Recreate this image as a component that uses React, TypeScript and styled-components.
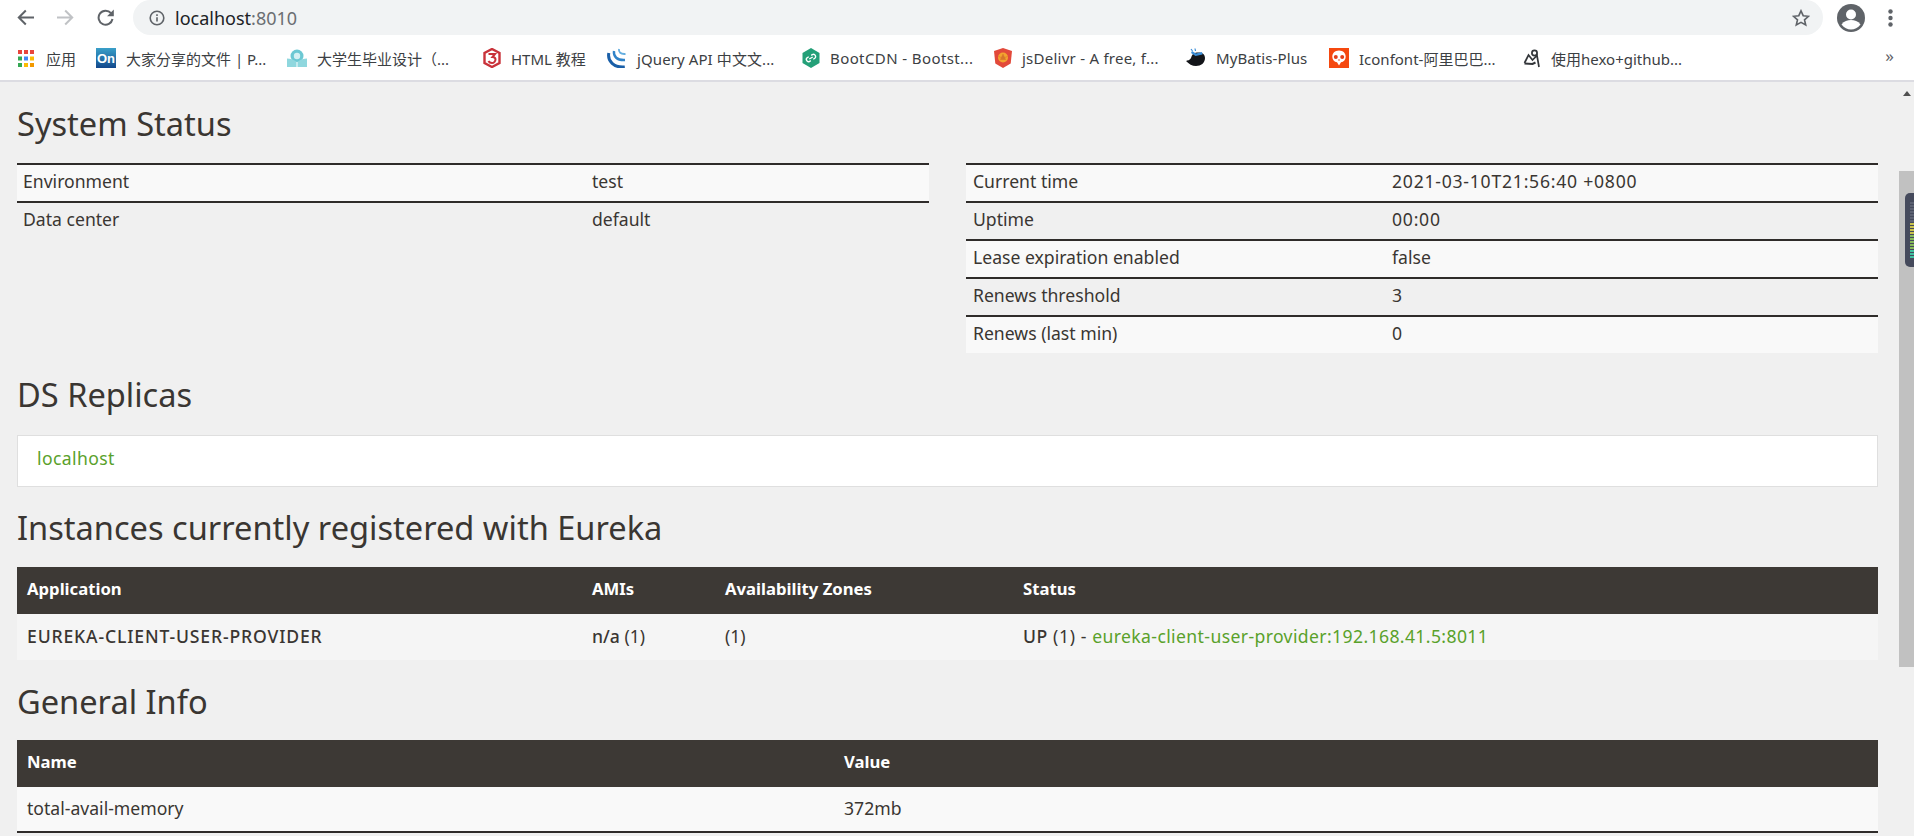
import React from 'react';
import styled, { createGlobalStyle } from 'styled-components';

const GlobalStyle = createGlobalStyle`
  html, body {
    margin: 0;
    height: 100%;
    overflow: hidden;
    background: #f0f0f0;
  }
  * {
    box-sizing: border-box;
  }
`;

const UI_FONT = `"Noto Sans", "Noto Sans CJK SC", sans-serif`;
const PAGE_FONT = `"Noto Sans", "Open Sans", sans-serif`;

const Shell = styled.div`
  display: flex;
  flex-direction: column;
  width: 1914px;
  height: 836px;
  overflow: hidden;
`;

const Toolbar = styled.header`
  display: flex;
  align-items: center;
  height: 35px;
  padding-left: 17px;
  background: #fff;
  flex: none;
`;

const NavButton = styled.button`
  display: flex;
  width: 17px;
  height: 17px;
  padding: 0;
  margin-right: 23px;
  border: 0;
  background: none;
  &:nth-child(3) {
    margin-right: 19px;
  }
`;

const AddressBar = styled.div`
  display: flex;
  align-items: center;
  width: 1690px;
  height: 35px;
  padding: 0 13px 0 16px;
  border-radius: 18px;
  background: #f1f3f4;
  font: 18px ${UI_FONT};
  color: #202124;
`;

const Host = styled.span`
  margin-left: 10px;
  flex: 1;
`;

const Port = styled.span`
  color: #6b6e72;
`;

const ProfileArea = styled.div`
  display: flex;
  align-items: center;
  margin-left: 14px;
  gap: 23px;
`;

const Bookmarks = styled.nav`
  display: flex;
  align-items: center;
  height: 47px;
  padding: 1px 0 0 18px;
  background: #fff;
  border-bottom: 2px solid #dcdce2;
  flex: none;
  position: relative;
`;

const Bookmark = styled.a<{ $width: number; $spacing?: number }>`
  display: flex;
  align-items: center;
  gap: 10px;
  width: ${(p) => p.$width}px;
  font: 15px ${UI_FONT};
  letter-spacing: ${(p) => p.$spacing ?? 0}px;
  color: #3c4043;
  white-space: nowrap;
  flex: none;
`;

const IconSlot = styled.span`
  display: flex;
  margin-right: 2px;
`;

const More = styled.span`
  position: absolute;
  right: 20px;
  top: 9px;
  font: 17px ${UI_FONT};
  color: #5f6368;
`;

const Body = styled.div`
  display: flex;
  flex: 1;
  min-height: 0;
`;

const Page = styled.main`
  flex: 1;
  padding: 0 21px 0 17px;
  font: 17.6px/22px ${PAGE_FONT};
  color: #3a3632;
  min-width: 0;
`;

const Heading = styled.h1<{ $top: number; $bottom: number }>`
  margin: ${(p) => p.$top}px 0 ${(p) => p.$bottom}px;
  font: 400 32.6px/40px ${PAGE_FONT};
  color: #3a3632;
`;

const Columns = styled.div`
  display: grid;
  grid-template-columns: 912px 912px;
  column-gap: 37px;
  align-items: start;
`;

const StatusRow = styled.div<{ $odd: boolean; $keyWidth: number; $pad: number }>`
  display: grid;
  grid-template-columns: ${(p) => p.$keyWidth}px 1fr;
  height: 38px;
  padding: 0 6px 5px ${(p) => p.$pad}px;
  align-items: center;
  border-top: 2px solid #2f2c2a;
  background: ${(p) => (p.$odd ? '#f9f9f9' : 'transparent')};
`;

const Wide = styled.span<{ $spacing: number }>`
  letter-spacing: ${(p) => p.$spacing}px;
`;

const ReplicaBox = styled.div`
  height: 52px;
  padding: 11px 19px;
  border: 1px solid #dfdfdf;
  background: #fff;
`;

const GreenLink = styled.a`
  color: #59a12a;
  letter-spacing: 0.38px;
`;

const DataTable = styled.div<{ $cols: string }>`
  display: grid;
  grid-template-columns: ${(p) => p.$cols};
`;

const HeadCell = styled.div`
  display: flex;
  align-items: center;
  height: 47px;
  padding: 0 0 4px 10px;
  background: #3d3935;
  color: #fff;
  font-size: 16.7px;
  font-weight: 700;
`;

const Cell = styled.div<{ $tint: string }>`
  display: flex;
  align-items: center;
  height: 46px;
  padding: 0 0 3px 10px;
  background: ${(p) => p.$tint};
  white-space: pre;
`;

const Bold = styled.b<{ $spacing?: number }>`
  font-weight: 500;
  letter-spacing: ${(p) => p.$spacing ?? 0}px;
`;

const RuleCell = styled(Cell)`
  border-bottom: 2px solid #2f2c2a;
`;

const ScrollTrack = styled.aside`
  width: 15px;
  flex: none;
  display: flex;
  flex-direction: column;
  align-items: center;
  position: relative;
`;

const ScrollArrow = styled.span`
  margin-top: 9px;
  width: 0;
  height: 0;
  border-left: 4px solid transparent;
  border-right: 4px solid transparent;
  border-bottom: 5px solid #505050;
`;

const ScrollThumb = styled.span`
  position: absolute;
  left: 0;
  top: 89px;
  width: 15px;
  height: 496px;
  background: #c1c1c1;
`;

const SideWidget = styled.svg`
  position: absolute;
  top: 111px;
  left: 6px;
`;

const statusLeft = [
  ['Environment', 'test'],
  ['Data center', 'default'],
];

const statusRight = [
  ['Current time', '2021-03-10T21:56:40 +0800'],
  ['Uptime', '00:00'],
  ['Lease expiration enabled', 'false'],
  ['Renews threshold', '3'],
  ['Renews (last min)', '0'],
];

const Back = (
  <svg width="17" height="17" viewBox="0 0 17 17" fill="none" stroke="#5f6368" strokeWidth="2">
    <path d="M17 8.500H2M8.800 1.500L1.800 8.500l7 7" />
  </svg>
);

const Forward = (
  <svg width="17" height="17" viewBox="0 0 17 17" fill="none" stroke="#c0c2c5" strokeWidth="2">
    <path d="M0 8.500h15M8.200 1.500l7 7-7 7" />
  </svg>
);

const Reload = (
  <svg width="17" height="17" viewBox="0 0 17 17" fill="none">
    <path d="M14 4.200A7 7 0 1 0 15.500 10" stroke="#5f6368" strokeWidth="2" />
    <path d="M16.800 0.500v6.700h-6.700z" fill="#5f6368" />
  </svg>
);

const Info = (
  <svg width="16" height="16" viewBox="0 0 16 16" fill="none" stroke="#5f6368" strokeWidth="1.600">
    <circle cx="8" cy="8" r="6.800" />
    <path d="M8 7.200v4.400M8 4.200v1.700" />
  </svg>
);

const Star = (
  <svg width="18" height="18" viewBox="0 0 18 18" fill="none" stroke="#5f6368" strokeWidth="1.600">
    <path d="M9 1.800l2.200 4.900 5.300.6-4 3.500 1.200 5.200L9 13.300 4.300 16l1.200-5.200-4-3.500 5.300-.6z" />
  </svg>
);

const Avatar = (
  <svg width="28" height="28" viewBox="0 0 28 28">
    <circle cx="14" cy="14" r="14" fill="#5f6368" />
    <circle cx="14" cy="10.500" r="5" fill="#fff" />
    <path d="M4.500 20.500c2.500-3.500 6-4.500 9.500-4.500s7 1 9.500 4.500C21 24 17.500 25.500 14 25.500S7 24 4.500 20.500z" fill="#fff" />
  </svg>
);

const Kebab = (
  <svg width="5" height="18" viewBox="0 0 5 18" fill="#5f6368">
    <circle cx="2.500" cy="2.500" r="2.200" />
    <circle cx="2.500" cy="9" r="2.200" />
    <circle cx="2.500" cy="15.500" r="2.200" />
  </svg>
);

const appColors = [
  ['#e8453c', '#e8453c', '#e8453c'],
  ['#34a853', '#4285f4', '#fbbc05'],
  ['#34a853', '#fbbc05', '#f29900'],
];

const AppsIcon = (
  <svg width="16" height="18" viewBox="0 0 16 18">
    {appColors.map((row, y) =>
      row.map((c, x) => <rect key={`${x}-${y}`} x={x * 6} y={y * 6.500 + 1} width="4" height="4" fill={c} />),
    )}
  </svg>
);

const OnIcon = (
  <svg width="20" height="20" viewBox="0 0 20 20">
    <defs>
      <linearGradient id="on" x1="0" y1="0" x2="0" y2="1">
        <stop offset="0" stopColor="#3aa0c9" />
        <stop offset="1" stopColor="#12488c" />
      </linearGradient>
    </defs>
    <rect width="20" height="20" fill="url(#on)" />
    <text x="10" y="15" textAnchor="middle" fontSize="13" fontWeight="700" fontFamily="Liberation Sans" fill="#fff">
      On
    </text>
  </svg>
);

const BookIcon = (
  <svg width="20" height="20" viewBox="0 0 20 20">
    <circle cx="10" cy="8" r="6.500" fill="#6cc8d3" />
    <circle cx="10" cy="8" r="3.200" fill="#d4f0f3" />
    <path d="M0 10.500c3 0 7 1 10 3.500 3-2.500 7-3.500 10-3.500V19H0z" fill="#8fd7de" />
    <path d="M10 14v5" stroke="#e8f7f8" strokeWidth="1.200" />
  </svg>
);

const Html3Icon = (
  <svg width="18" height="20" viewBox="0 0 18 20">
    <path d="M9 1l7.500 4v10L9 19l-7.500-4V5z" fill="#fff" stroke="#c9323a" strokeWidth="2.400" />
    <path d="M5.500 6H12L9.500 9c2 0 3 1 3 2.500S11 15 9 15c-1.500 0-3-.8-3.500-2" fill="none" stroke="#c9323a" strokeWidth="2" />
  </svg>
);

const JqueryIcon = (
  <svg width="20" height="20" viewBox="0 0 20 20" fill="none">
    <path d="M1.800 5c-1.500 8 5 15 16 14" strokeWidth="3" stroke="#1a5fa8" />
    <path d="M7 3c-.8 5.500 3 9.500 11 9" strokeWidth="2.400" stroke="#2f82c8" />
    <path d="M12 1c-.5 3 1.500 5.500 6.500 5" strokeWidth="1.900" stroke="#64aee0" />
  </svg>
);

const BootIcon = (
  <svg width="18" height="20" viewBox="0 0 18 20">
    <path d="M9 0l8.500 5v10L9 20 .5 15V5z" fill="#24a078" />
    <path d="M7.500 12.200H6.200a2.200 2.200 0 0 1 0-4.400h1.500M10.500 7.800h1.300a2.200 2.200 0 0 1 0 4.400h-1.500M7 10h4" fill="none" stroke="#fff" strokeWidth="1.400" transform="rotate(-30 9 10)" />
  </svg>
);

const DelivrIcon = (
  <svg width="18" height="20" viewBox="0 0 18 20">
    <path d="M9 0l9 3-1.300 12.500L9 20l-7.700-4.500L0 3z" fill="#e2493a" />
    <circle cx="9" cy="9.500" r="5" fill="#f3a32f" />
    <path d="M9 6.200l2.500 5.300h-5zM4.500 8.500l4 1.500M13.500 8.500l-4 1.500" fill="#d6762a" stroke="#d6762a" strokeWidth=".6" />
  </svg>
);

const BirdIcon = (
  <svg width="20" height="20" viewBox="0 0 20 20">
    <path d="M0 13c2-1 3 0 5-3 1-3 2-5 6-5.500 4-.5 8 1 8 5.500 0 5-4 8-9 8-4 0-7-2-10-5z" fill="#131519" />
    <path d="M6 3l4 2.500 6-1.500.5 2.500-7 1.500L5 5z" fill="#3b8ed8" />
    <path d="M5 1l1.500 2M9 .5l.5 2.500" stroke="#3b8ed8" strokeWidth="1.200" />
  </svg>
);

const IconfontIcon = (
  <svg width="20" height="20" viewBox="0 0 20 20">
    <rect width="20" height="20" fill="#f5480f" />
    <path d="M10 2.500c4.200 0 6.700 2.800 6.700 6.200 0 3-2 5-4.700 5.600L10 17.500l-2-3.200C5.300 13.700 3.300 11.700 3.300 8.700c0-3.400 2.500-6.200 6.700-6.200z" fill="#fff" />
    <circle cx="6.800" cy="9" r="2" fill="#e2401a" />
    <circle cx="13.200" cy="9" r="2" fill="#e2401a" />
    <circle cx="10" cy="12" r=".8" fill="#e2401a" />
  </svg>
);

const HexoIcon = (
  <svg width="18" height="20" viewBox="0 0 18 20" fill="none" stroke="#33363a" strokeWidth="1.700">
    <circle cx="11.500" cy="5" r="2.600" />
    <path d="M1.500 15l4-8 4 5 4.500-4.500 2 11.500" />
    <path d="M1.500 15.500l8 .5 3-1.500" strokeWidth="2.200" />
  </svg>
);

const bookmarks: { icon: React.ReactNode; label: string; width: number; spacing?: number }[] = [
  { icon: <IconSlot>{AppsIcon}</IconSlot>, label: '应用', width: 78 },
  { icon: OnIcon, label: '大家分享的文件 | P...', width: 191 },
  { icon: BookIcon, label: '大学生毕业设计（...', width: 196 },
  { icon: Html3Icon, label: 'HTML 教程', width: 124 },
  { icon: JqueryIcon, label: 'jQuery API 中文文...', width: 195, spacing: 0.1 },
  { icon: BootIcon, label: 'BootCDN - Bootst...', width: 192, spacing: 0.4 },
  { icon: DelivrIcon, label: 'jsDelivr - A free, f...', width: 192, spacing: 0.25 },
  { icon: BirdIcon, label: 'MyBatis-Plus', width: 143, spacing: 0.1 },
  { icon: IconfontIcon, label: 'Iconfont-阿里巴巴...', width: 194 },
  { icon: HexoIcon, label: '使用hexo+github...', width: 200 },
];

const sideBarColor = (i: number): string => {
  if (i < 7) return '#5c6172';
  if (i < 11) return '#c9c24d';
  if (i < 16) return '#86b95a';
  return '#3fbf9f';
};

const wideValues: Record<string, number> = {
  '2021-03-10T21:56:40 +0800': 0.76,
  '00:00': 0.76,
};

export default function App() {
  return (
    <Shell>
      <GlobalStyle />
      <Toolbar>
        <NavButton>{Back}</NavButton>
        <NavButton>{Forward}</NavButton>
        <NavButton>{Reload}</NavButton>
        <AddressBar>
          {Info}
          <Host>
            localhost<Port>:8010</Port>
          </Host>
          {Star}
        </AddressBar>
        <ProfileArea>
          {Avatar}
          {Kebab}
        </ProfileArea>
      </Toolbar>
      <Bookmarks>
        {bookmarks.map((b) => (
          <Bookmark key={b.label} $width={b.width} $spacing={b.spacing}>
            {b.icon}
            {b.label}
          </Bookmark>
        ))}
        <More>»</More>
      </Bookmarks>
      <Body>
        <Page>
          <Heading $top={22} $bottom={19}>
            System Status
          </Heading>
          <Columns>
            <div>
              {statusLeft.map(([k, v], i) => (
                <StatusRow key={k} $odd={i % 2 === 0} $keyWidth={569} $pad={6}>
                  <span>{k}</span>
                  <span>{v}</span>
                </StatusRow>
              ))}
            </div>
            <div>
              {statusRight.map(([k, v], i) => (
                <StatusRow key={k} $odd={i % 2 === 0} $keyWidth={419} $pad={7}>
                  <span>{k}</span>
                  <Wide $spacing={wideValues[v] ?? 0}>{v}</Wide>
                </StatusRow>
              ))}
            </div>
          </Columns>
          <Heading $top={22} $bottom={20}>
            DS Replicas
          </Heading>
          <ReplicaBox>
            <GreenLink>localhost</GreenLink>
          </ReplicaBox>
          <Heading $top={21} $bottom={19}>
            Instances currently registered with Eureka
          </Heading>
          <DataTable $cols="565px 133px 298px 1fr">
            <HeadCell>Application</HeadCell>
            <HeadCell>AMIs</HeadCell>
            <HeadCell>Availability Zones</HeadCell>
            <HeadCell>Status</HeadCell>
            <Cell $tint="#f5f5f5">
              <Bold $spacing={0.85}>EUREKA-CLIENT-USER-PROVIDER</Bold>
            </Cell>
            <Cell $tint="#f5f5f5">
              <Bold>n/a</Bold> (1)
            </Cell>
            <Cell $tint="#f5f5f5">(1)</Cell>
            <Cell $tint="#f5f5f5">
              <Wide $spacing={0.6}>
                <Bold $spacing={0.6}>UP</Bold> (1) -{' '}
              </Wide>
              <GreenLink>eureka-client-user-provider:192.168.41.5:8011</GreenLink>
            </Cell>
          </DataTable>
          <Heading $top={22} $bottom={18}>
            General Info
          </Heading>
          <DataTable $cols="817px 1fr">
            <HeadCell>Name</HeadCell>
            <HeadCell>Value</HeadCell>
            <RuleCell $tint="#f9f9f9">total-avail-memory</RuleCell>
            <RuleCell $tint="#f9f9f9">372mb</RuleCell>
          </DataTable>
        </Page>
        <ScrollTrack>
          <ScrollArrow />
          <ScrollThumb />
          <SideWidget width="9" height="74" viewBox="0 0 9 74">
            <rect width="14" height="74" rx="5" fill="#454a5c" />
            {Array.from({ length: 19 }, (_, i) => (
              <rect key={i} x="5" y={9 + i * 3} width="4" height="2" fill={sideBarColor(i)} />
            ))}
          </SideWidget>
        </ScrollTrack>
      </Body>
    </Shell>
  );
}
